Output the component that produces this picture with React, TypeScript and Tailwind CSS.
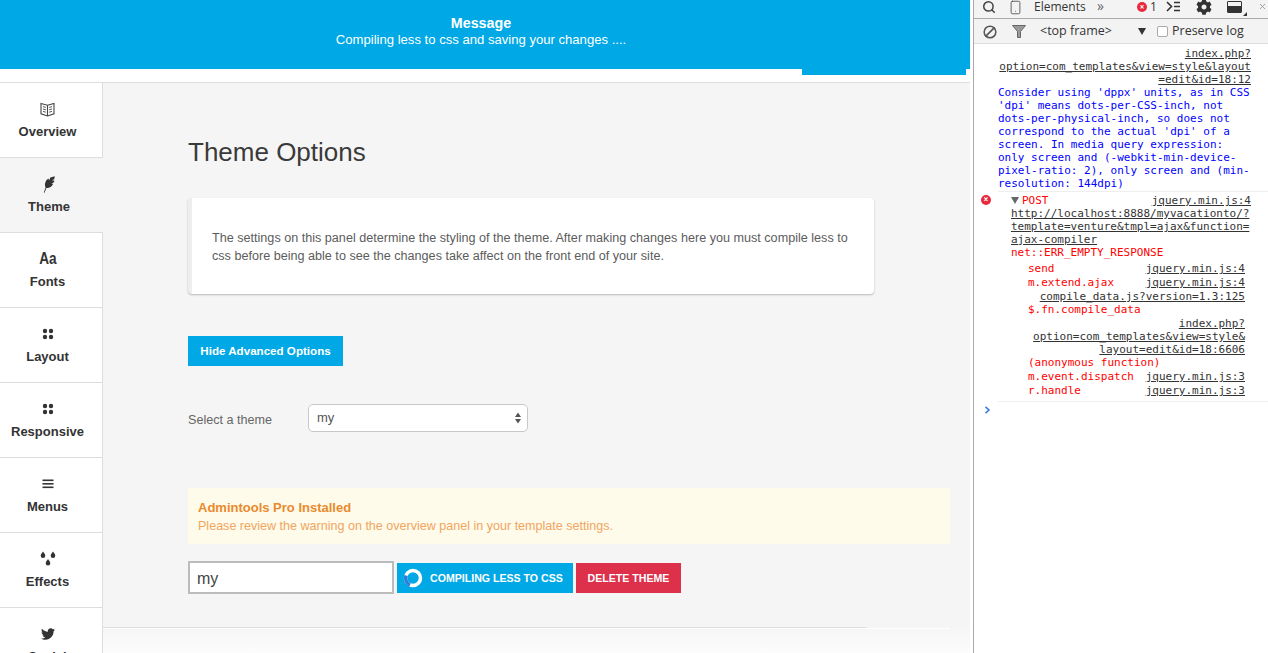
import React from "react";
import {Search, Smartphone, Ban, X} from "lucide-react";
import {FaCog, FaTwitter} from "react-icons/fa";

const Book = () => (
    <svg width="15" height="15" viewBox="0 0 15 15" fill="none" stroke="#444" strokeWidth="1.1">
        <path d="M1 1.5L7.5 3.2L14 1.5V11.8L7.5 14L1 11.8z"/>
        <path d="M7.5 3.2V14"/>
        <path d="M3 4.6L5.8 5.4M3 7L5.8 7.8M3 9.4L5.8 10.2M12 4.6L9.2 5.4M12 7L9.2 7.8M12 9.4L9.2 10.2" strokeWidth="0.9"/>
    </svg>
);

const Feather = () => (
    <svg width="12" height="17" viewBox="0 0 12 17" fill="#333">
        <path d="M0.8 16.6L2.6 11.6C1.2 8.6 2.4 4 5.6 2.6L6 4.4L7.4 1.4L11.8 0.2L11.2 3.2L9 4.2L11.6 4.8L10 7.2L8.2 7.2L10 8.2C8.4 11 6 12.4 3.4 12L1.5 16.8z"/>
    </svg>
);

const Dots = () => (
    <svg width="12" height="12" viewBox="0 0 12 12" fill="#333">
        <circle cx="3" cy="3" r="2.2"/>
        <circle cx="9" cy="3" r="2.2"/>
        <circle cx="3" cy="9" r="2.2"/>
        <circle cx="9" cy="9" r="2.2"/>
    </svg>
);

const Bars = () => (
    <svg width="12" height="10" viewBox="0 0 12 10" fill="#333">
        <rect x="0.5" y="0.5" width="11" height="1.6"/>
        <rect x="0.5" y="4" width="11" height="1.6"/>
        <rect x="0.5" y="7.5" width="11" height="1.6"/>
    </svg>
);

const Drops = () => (
    <svg width="16" height="16" viewBox="0 0 16 16" fill="#333">
        <path d="M3 0.5C3.8 2 5.3 3 5.3 4.8a2.3 2.3 0 0 1-4.6 0C0.7 3 2.2 2 3 0.5z"/>
        <path d="M13 0.5C13.8 2 15.3 3 15.3 4.8a2.3 2.3 0 0 1-4.6 0C10.7 3 12.2 2 13 0.5z"/>
        <path d="M8 8C8.8 9.5 10.3 10.5 10.3 12.3a2.3 2.3 0 0 1-4.6 0C5.7 10.5 7.2 9.5 8 8z"/>
    </svg>
);

const navItems = [
    {label: "Overview", icon: <Book/>},
    {label: "Theme", icon: <Feather/>, active: true},
    {label: "Fonts", icon: <span className="block text-[17px] leading-[16px] font-bold text-[#333] scale-x-[0.8]">Aa</span>},
    {label: "Layout", icon: <Dots/>},
    {label: "Responsive", icon: <Dots/>},
    {label: "Menus", icon: <Bars/>},
    {label: "Effects", icon: <Drops/>},
    {label: "Social", icon: <FaTwitter size={14} color="#333"/>},
];

const Link = ({children}: {children: React.ReactNode}) => (
    <span className="underline text-[#333]">{children}</span>
);

const StackRow = ({name, file}: {name: string; file: string}) => (
    <div className="flex justify-between h-[14px] leading-[14px] pl-[54px] pr-[23px] text-[#f00]">
        <span>{name}</span>
        <Link>{file}</Link>
    </div>
);

const App = (): React.JSX.Element => {
    return (
        <div className="relative flex w-[1268px] h-[653px] overflow-hidden bg-white font-['Liberation_Sans',sans-serif]">
            {/* message banner */}
            <div className="absolute top-0 left-0 w-[970px] h-[69px] bg-[#00a8e6] text-white text-center pr-[8px]">
                <div className="mt-[15px] text-[14.3px] leading-[16px] font-bold">Message</div>
                <div className="text-[13.1px] leading-[17px]">Compiling less to css and saving your changes ....</div>
                <div className="absolute left-[802px] top-[69px] w-[164px] h-[6px] bg-[#00a8e6]"/>
            </div>

            <div className="w-[970px] shrink-0 flex flex-col pt-[82px]">
                <div className="flex border-t border-[#ddd] h-[545px] shrink-0">
                    <div className="w-[103px] shrink-0 flex flex-col">
                        {navItems.map((item) => (
                            <div
                                key={item.label}
                                className={`h-[75px] shrink-0 flex flex-col items-center pt-[18px] pr-[7px] border-b border-[#ddd] ${item.active ? "bg-[#f5f5f5] w-[104px] pl-[1px]" : "bg-white w-[103px] border-r"}`}
                            >
                                <div className="h-[16px] flex items-center justify-center">{item.icon}</div>
                                <div className="mt-[7px] text-[13px] leading-[16px] font-bold text-[#333]">{item.label}</div>
                            </div>
                        ))}
                    </div>
                    <div className="flex-1 bg-[#f5f5f5] pl-[85px] pr-[20px] pt-[54px]">
                        <h1 className="text-[26px] leading-[30px] text-[#3a3a3a]">Theme Options</h1>
                        <div className="mt-[31px] w-[686px] h-[96px] bg-white border-l-[4px] border-[#eeeeee] rounded-[4px] shadow-[0_1px_2px_rgba(0,0,0,0.25)] pl-[20px] pr-[16px] pt-[31px] text-[12.62px] leading-[18px] text-[#5c5c5c]">
                            The settings on this panel determine the styling of the theme. After making changes here you must compile less to css before being able to see the changes take affect on the front end of your site.
                        </div>
                        <button className="block mt-[42px] w-[155px] h-[30px] bg-[#00a8e6] text-white text-[11.6px] font-bold">
                            Hide Advanced Options
                        </button>
                        <div className="mt-[38px] flex items-center">
                            <label className="w-[120px] text-[12.6px] text-[#666] pt-[4px]">Select a theme</label>
                            <div className="w-[220px] h-[28px] bg-white border border-[#c8c8c8] rounded-[5px] flex items-center justify-between pl-[8px] pr-[6px] text-[13px] text-[#555]">
                                <span className="-mt-[1px]">my</span>
                                <svg width="6" height="12" viewBox="0 0 6 12" fill="#555">
                                    <path d="M3 0.5L6 5H0z"/>
                                    <path d="M3 11.5L6 7H0z"/>
                                </svg>
                            </div>
                        </div>
                        <div className="mt-[56px] w-[762px] h-[56px] bg-[#fffbea] pl-[10px] pt-[11px] leading-[18px]">
                            <div className="text-[13px] font-bold text-[#e98a2e]">Admintools Pro Installed</div>
                            <div className="text-[12.55px] text-[#f0a561]">Please review the warning on the overview panel in your template settings.</div>
                        </div>
                        <div className="mt-[17px] flex items-center">
                            <input
                                readOnly
                                value="my"
                                className="w-[206px] h-[33px] pt-[2px] bg-white border-2 border-[#bcbcbc] pl-[7px] text-[16px] text-[#444] outline-none"
                            />
                            <button className="ml-[3px] w-[176px] h-[30px] bg-[#00a8e6] text-white text-[10.6px] font-bold flex items-center pl-[6px]">
                                <svg width="20" height="20" viewBox="0 0 20 20" fill="none" className="mr-[7px]">
                                    <circle cx="10" cy="10" r="7.5" stroke="#fff" strokeWidth="3.5"/>
                                    <path d="M3 7.5A7.5 7.5 0 0 0 7 17" stroke="#2a7fd8" strokeWidth="3.5"/>
                                </svg>
                                <span className="mt-[2px]">COMPILING LESS TO CSS</span>
                            </button>
                            <button className="ml-[3px] w-[105px] h-[30px] pt-[2px] bg-[#dc304b] text-white text-[10.6px] font-bold">
                                DELETE THEME
                            </button>
                        </div>
                    </div>
                </div>
                {/* footer strip, the grey rule stops short of the white one */}
                <div className="ml-[103px] h-[26px] bg-[#f5f5f5] flex flex-col">
                    <div className="w-[763px] h-[1px] shrink-0 bg-[#ddd]"/>
                    <div className="w-[847px] h-[1px] shrink-0 bg-white"/>
                    <div className="flex-1 bg-gradient-to-b from-[#f6f6f6] to-[#fcfcfc]"/>
                </div>
            </div>

            <div className="w-[3px] shrink-0"/>

            {/* devtools */}
            <div className="flex-1 border-l border-[#aaa] flex flex-col font-['DejaVu_Sans_Mono',monospace] text-[11px] leading-[13px]">
                <div className="h-[19px] shrink-0 bg-[#f3f3f3] border-b border-[#aaa] flex items-center font-['Open_Sans',sans-serif] text-[12px] text-[#333] relative">
                    <Search size={14} strokeWidth={2.6} color="#444" className="absolute left-[8px] top-[0px]"/>
                    <Smartphone size={15} strokeWidth={1.3} color="#444" className="absolute left-[34px] top-[0px]"/>
                    <span className="absolute left-[60px] top-[0px] leading-[14px]">Elements</span>
                    <span className="absolute left-[123px] top-[0px] text-[14px] leading-[12px] text-[#666]">»</span>
                    <span className="absolute left-[163px] top-[2px] w-[10px] h-[10px] rounded-full bg-[#e8293d] text-white text-[8px] leading-[10px] text-center font-bold">×</span>
                    <span className="absolute left-[176px] top-[0px] leading-[14px]">1</span>
                    <svg width="15" height="12" viewBox="0 0 15 12" className="absolute left-[192px] top-[1px]" fill="none" stroke="#333" strokeWidth="1.6">
                        <path d="M1 1l4.5 4.5L1 10"/>
                        <path d="M8 1.5h6M8 5.5h6M8 9.5h6"/>
                    </svg>
                    <FaCog size={16} color="#333" className="absolute left-[222px] -top-[1px]"/>
                    <span className="absolute left-[253px] top-[1px] w-[15px] h-[12px] border border-[#333] rounded-[1px] flex items-end">
                        <span className="block w-full h-[6px] bg-[#333]"/>
                    </span>
                    <span className="absolute left-[269px] top-[12px] border-l-[4px] border-b-[4px] border-l-transparent border-b-[#333]"/>
                    <X size={9} strokeWidth={2} color="#888" className="absolute left-[284px] top-[2px]"/>
                </div>
                <div className="h-[25px] shrink-0 border-b border-[#ddd] bg-[#f3f3f3] relative font-['Open_Sans',sans-serif] text-[12.5px] text-[#333]">
                    <Ban size={14} strokeWidth={2.6} color="#555" className="absolute left-[9px] top-[6px] -scale-x-100"/>
                    <svg width="14" height="13" viewBox="0 0 14 13" className="absolute left-[38px] top-[6px]">
                        <path d="M0.5 0.5H13.5L8.5 6.5V12.5H5.5V6.5z" fill="#9a9a9a" stroke="#666"/>
                    </svg>
                    <span className="absolute left-[66px] top-[4px] leading-[16px]">&lt;top frame&gt;</span>
                    <span className="absolute left-[164px] top-[9px] border-x-[4px] border-t-[7px] border-x-transparent border-t-[#333]"/>
                    <span className="absolute left-[183px] top-[7px] w-[11px] h-[11px] border border-[#aaa] rounded-[2px] bg-white"/>
                    <span className="absolute left-[198px] top-[4px] leading-[16px]">Preserve log</span>
                </div>
                <div className="pt-[3px]">
                    <div className="pr-[17px] text-right">
                        <Link>index.php?<br/>option=com_templates&amp;view=style&amp;layout<br/>=edit&amp;id=18:12</Link>
                    </div>
                    <div className="pl-[24px] text-[#00f] whitespace-pre">
                        {"Consider using 'dppx' units, as in CSS\n'dpi' means dots-per-CSS-inch, not\ndots-per-physical-inch, so does not\ncorrespond to the actual 'dpi' of a\nscreen. In media query expression:\nonly screen and (-webkit-min-device-\npixel-ratio: 2), only screen and (min-\nresolution: 144dpi)"}
                    </div>
                    <div className="ml-[24px] mt-[1px] border-t border-[#eee]"/>
                    <div className="relative pt-[2px]">
                        <span className="absolute left-[7px] top-[3px] w-[10px] h-[10px] rounded-full bg-[#e8293d] text-white text-[8px] leading-[10px] text-center font-bold">×</span>
                        <div className="flex justify-between pl-[37px] pr-[17px]">
                            <span className="text-[#f00] flex items-center">
                                <span className="mr-[3px] border-x-[4px] border-t-[7px] border-x-transparent border-t-[#666]"/>
                                POST
                            </span>
                            <Link>jquery.min.js:4</Link>
                        </div>
                        <div className="pl-[37px]">
                            <Link>http://localhost:8888/myvacationto/?<br/>template=venture&amp;tmpl=ajax&amp;function=<br/>ajax-compiler</Link>
                        </div>
                        <div className="pl-[37px] text-[#f00]">net::ERR_EMPTY_RESPONSE</div>
                    </div>
                    <div className="mt-[3px]">
                        <StackRow name="send" file="jquery.min.js:4"/>
                        <StackRow name="m.extend.ajax" file="jquery.min.js:4"/>
                        <div className="h-[14px] leading-[14px] pr-[23px] text-right"><Link>compile_data.js?version=1.3:125</Link></div>
                        <div className="-mt-[1px] pl-[54px] text-[#f00]">$.fn.compile_data</div>
                        <div className="pr-[23px] text-right mt-[1px]">
                            <Link>index.php?<br/>option=com_templates&amp;view=style&amp;<br/>layout=edit&amp;id=18:6606</Link>
                        </div>
                        <div className="pl-[54px] mb-[1px] text-[#f00]">(anonymous function)</div>
                        <StackRow name="m.event.dispatch" file="jquery.min.js:3"/>
                        <StackRow name="r.handle" file="jquery.min.js:3"/>
                    </div>
                    <div className="ml-[24px] mt-[3px] border-t border-[#eee]"/>
                    <svg width="7" height="8" viewBox="0 0 7 8" fill="none" stroke="#3b78e7" strokeWidth="1.6" className="ml-[10px] mt-[4px]">
                        <path d="M1.5 0.8L5 4L1.5 7.2"/>
                    </svg>
                </div>
            </div>
        </div>
    );
};

export default App;
